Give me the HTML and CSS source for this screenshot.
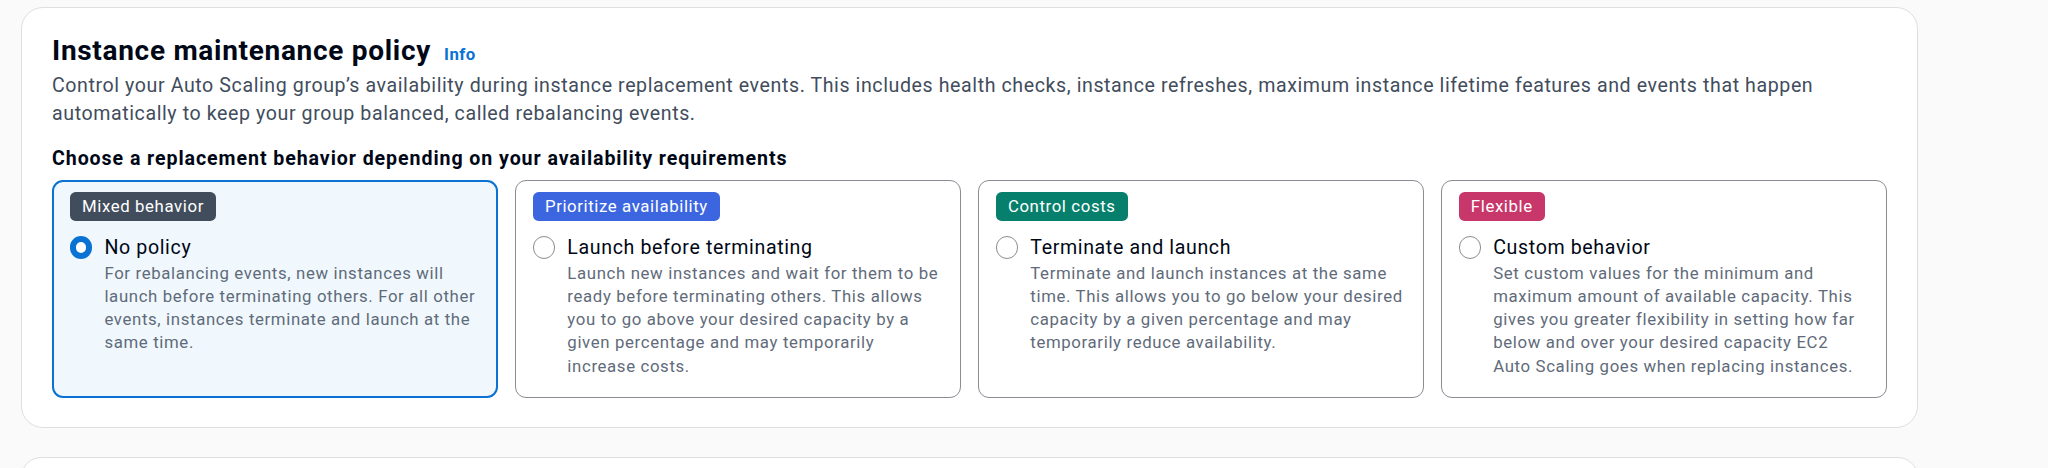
FILE: index.html
```html
<!DOCTYPE html>
<html lang="en">
<head>
<meta charset="utf-8">
<title>Instance maintenance policy</title>
<link rel="stylesheet" href="styles.css">
</head>
<body>
<div class="page">
  <section class="container">
    <header class="header">
      <h2 class="title">Instance maintenance policy<a class="info" href="#">Info</a></h2>
      <p class="desc">Control your Auto Scaling group’s availability during instance replacement events. This includes health checks, instance refreshes, maximum instance lifetime features and events that happen automatically to keep your group balanced, called rebalancing events.</p>
    </header>
    <div class="field">
      <div class="field-label">Choose a replacement behavior depending on your availability requirements</div>
      <div class="tiles">
        <label class="tile selected">
          <span class="badge badge-grey">Mixed behavior</span>
          <div class="radio-row">
            <span class="radio-box"><span class="radio checked"></span></span>
            <div class="radio-text">
              <div class="radio-label">No policy</div>
              <div class="radio-desc">For rebalancing events, new instances will launch before terminating others. For all other events, instances terminate and launch at the same time.</div>
            </div>
          </div>
        </label>
        <label class="tile">
          <span class="badge badge-blue">Prioritize availability</span>
          <div class="radio-row">
            <span class="radio-box"><span class="radio"></span></span>
            <div class="radio-text">
              <div class="radio-label">Launch before terminating</div>
              <div class="radio-desc">Launch new instances and wait for them to be ready before terminating others. This allows you to go above your desired capacity by a given percentage and may temporarily increase costs.</div>
            </div>
          </div>
        </label>
        <label class="tile">
          <span class="badge badge-green">Control costs</span>
          <div class="radio-row">
            <span class="radio-box"><span class="radio"></span></span>
            <div class="radio-text">
              <div class="radio-label">Terminate and launch</div>
              <div class="radio-desc">Terminate and launch instances at the same time. This allows you to go below your desired capacity by a given percentage and may temporarily reduce availability.</div>
            </div>
          </div>
        </label>
        <label class="tile">
          <span class="badge badge-pink">Flexible</span>
          <div class="radio-row">
            <span class="radio-box"><span class="radio"></span></span>
            <div class="radio-text">
              <div class="radio-label">Custom behavior</div>
              <div class="radio-desc">Set custom values for the minimum and maximum amount of available capacity. This gives you greater flexibility in setting how far below and over your desired capacity EC2 Auto Scaling goes when replacing instances.</div>
            </div>
          </div>
        </label>
      </div>
    </div>
  </section>
  <section class="container next"></section>
</div>
</body>
</html>
```

FILE: styles.css
```css
* { box-sizing: border-box; }

html, body {
  margin: 0;
  padding: 0;
  background: #fafafa;
  font-family: Roboto, "Liberation Sans", Arial, sans-serif;
  color: #000716;
}

.page {
  padding: 7px 130px 0 21px;
}

.container {
  background: #ffffff;
  border: 1px solid #dedfe1;
  border-radius: 22px;
  padding: 26px 30px 29px 30px;
}

.container.next {
  margin-top: 29px;
  height: 40px;
  padding: 0;
}

.title {
  margin: 0;
  font-size: 28px;
  line-height: 33.6px;
  font-weight: 700;
  letter-spacing: 0.025em;
  color: #000716;
}

.info {
  margin-left: 13px;
  font-size: 16.8px;
  font-weight: 700;
  letter-spacing: 0.03em;
  color: #0972d3;
  text-decoration: none;
}

.desc {
  margin: 0;
  font-size: 19.6px;
  line-height: 28px;
  letter-spacing: 0.03em;
  color: #414d5c;
}

.field {
  margin-top: 17px;
}

.field-label {
  font-size: 19.6px;
  line-height: 28px;
  font-weight: 700;
  letter-spacing: 0.047em;
  color: #000716;
}

.tiles {
  margin-top: 7px;
  display: grid;
  grid-template-columns: repeat(4, 1fr);
  gap: 16.8px;
}

.tile {
  display: block;
  border: 1px solid #8c8c94;
  border-radius: 11px;
  padding: 11px 17px 19px 17px;
  background: #ffffff;
}

.tile.selected {
  border: 2px solid #0972d3;
  padding: 10px 16px 18px 16px;
  background: #f0f8fd;
}

.badge {
  display: inline-block;
  height: 29px;
  line-height: 29px;
  padding: 0 12px;
  border-radius: 5.6px;
  font-size: 16.8px;
  letter-spacing: 0.036em;
  color: #ffffff;
  white-space: nowrap;
}

.badge-grey { background: #414d5c; }
.badge-blue { background: #3b66df; }
.badge-green { background: #067f6c; }
.badge-pink { background: #c7376a; }

.radio-row {
  margin-top: 13px;
  display: flex;
  gap: 12px;
  align-items: flex-start;
}

.radio-box {
  flex: none;
  height: 28px;
  display: flex;
  align-items: center;
}

.radio {
  display: block;
  width: 22.4px;
  height: 22.4px;
  border-radius: 50%;
  border: 1.8px solid #8c8c94;
  background: #ffffff;
}

.radio.checked {
  border: 6.6px solid #0972d3;
}

.radio-text {
  flex: 1;
  min-width: 0;
}

.radio-label {
  font-size: 19.6px;
  line-height: 28px;
  letter-spacing: 0.032em;
  color: #000716;
}

.radio-desc {
  font-size: 16.8px;
  line-height: 23.25px;
  letter-spacing: 0.038em;
  color: #5f6b7a;
}
```
